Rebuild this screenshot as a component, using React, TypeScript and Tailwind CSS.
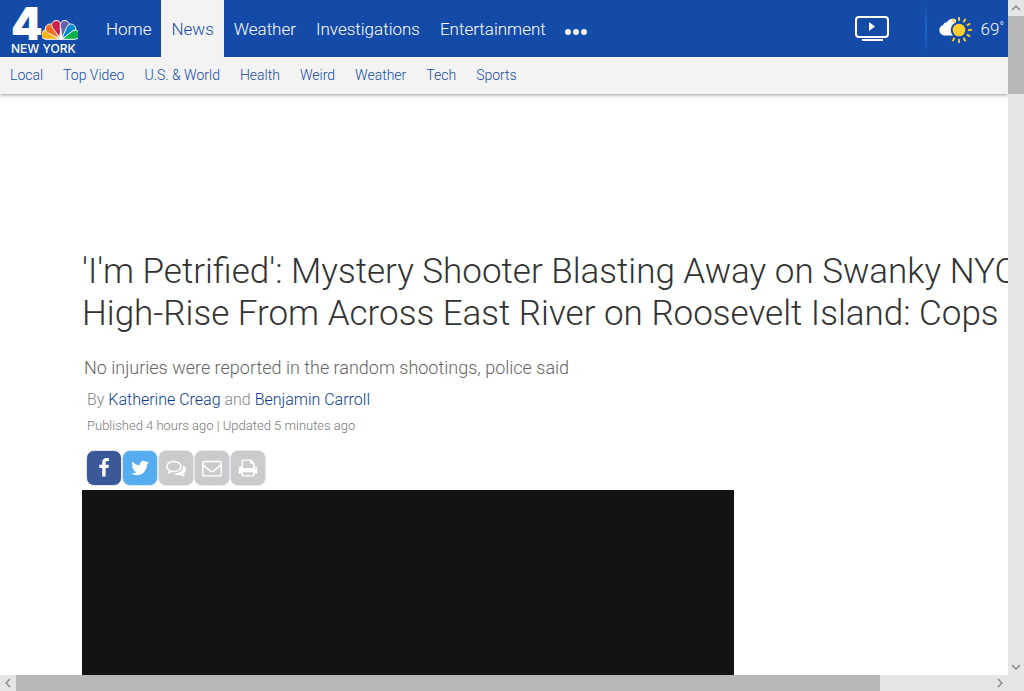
import React from "react";

const sections = ["Home", "News", "Weather", "Investigations", "Entertainment"];
const topics = ["Local", "Top Video", "U.S. & World", "Health", "Weird", "Weather", "Tech", "Sports"];

const shareLinks = [
  {
    label: "Share on Facebook",
    tone: "bg-[#3b5998]",
    d: "M1343 12v264h-157q-86 0-116 36t-30 108v189h293l-39 296h-254v759h-306v-759h-255v-296h255v-218q0-186 104-288.5t277-102.5q147 0 228 12z",
  },
  {
    label: "Share on Twitter",
    tone: "bg-[#55acee]",
    d: "M1684 408q-67 98-162 167 1 14 1 42 0 130-38 259.5t-115.5 248.5-184.5 210.5-258 146-323 54.5q-271 0-496-145 35 4 78 4 225 0 401-138-105-2-188-64.5t-114-159.5q33 5 61 5 43 0 85-11-112-23-185.5-111.5t-73.5-205.5v-4q68 38 146 41-66-44-105-115t-39-154q0-88 44-163 121 149 294.5 238.5t371.5 99.5q-8-38-8-74 0-134 94.5-228.5t228.5-94.5q140 0 236 102 109-21 205-78-37 115-142 178 93-10 186-50z",
  },
  {
    label: "Comments",
    tone: "bg-[#cbcbcb]",
    d: "M704 384q-153 0-286 52t-211.5 141-78.5 191q0 82 53 158t149 132l97 56-35 84q34-20 62-39l44-31 53 10q78 14 153 14 153 0 286-52t211.5-141 78.5-191-78.5-191-211.5-141-286-52zm0-128q191 0 353.5 68.5t256.5 186.5 94 257-94 257-256.5 186.5-353.5 68.5q-86 0-176-16-124 88-278 128-36 9-86 16h-3q-11 0-20.5-8t-11.5-21q-1-3-1-6.5t.5-6.5 2-6l2.5-5 3.5-5.5 4-5 4.5-5 4-4.5q5-6 23-25t26-29.5 22.5-29 25-38.5 20.5-44q-124-72-195-177t-71-224q0-139 94-257t256.5-186.5 353.5-68.5zm822 1169q10 24 20.5 44t25 38.5 22.5 29 26 29.5 23 25q1 1 4 4.5t4.5 5 4 5 3.5 5.5l2.5 5 2 6 .5 6.5-1 6.5q-3 14-13 22t-22 7q-50-7-86-16-154-40-278-128-90 16-176 16-271 0-472-132 58 4 88 4 161 0 309-45t264-129q125-92 192-212t67-254q0-77-23-152 129 71 204 178t75 230q0 120-71 224.500t-195 176.500z",
  },
  {
    label: "Email",
    tone: "bg-[#cbcbcb]",
    d: "M1664 1504v-768q-32 36-69 66-268 206-426 338-51 43-83 67t-86.5 48.5-102.5 24.5h-2q-48 0-102.5-24.5t-86.5-48.5-83-67q-158-132-426-338-37-30-69-66v768q0 13 9.5 22.500t22.500 9.500h1472q13 0 22.500-9.500t9.500-22.500zm0-1051v-24.500l-.5-13-3-12.500-5.500-9-9-7.500-14-2.500h-1472q-13 0-22.500 9.500t-9.500 22.500q0 168 147 284 193 152 401 317 6 5 35 29.500t46 37.500 44.500 31.500 50.500 27.500 43 9h2q20 0 43-9t50.500-27.500 44.500-31.500 46-37.500 35-29.500q208-165 401-317 54-43 100.500-115.500t46.500-131.500zm128-37v1088q0 66-47 113t-113 47h-1472q-66 0-113-47t-47-113v-1088q0-66 47-113t113-47h1472q66 0 113 47t47 113z",
  },
  {
    label: "Print",
    tone: "bg-[#cbcbcb]",
    d: "M448 1536h896v-256h-896v256zm0-640h896v-384h-160q-40 0-68-28t-28-68v-160h-640v640zm1152 64q0-26-19-45t-45-19-45 19-19 45 19 45 45 19 45-19 19-45zm128 0v416q0 13-9.5 22.500t-22.500 9.500h-224v160q0 40-28 68t-68 28h-960q-40 0-68-28t-28-68v-160h-224q-13 0-22.500-9.500t-9.500-22.500v-416q0-79 56.500-135.500t135.500-56.500h64v-544q0-40 28-68t68-28h672q40 0 88 20t76 48l152 152q28 28 48 76t20 88v256h64q79 0 135.500 56.500t56.500 135.500z",
  },
];

const feathers = [
  { angle: -70, fill: "#fbb415" },
  { angle: -43, fill: "#f37021" },
  { angle: -16, fill: "#cc1f4c" },
  { angle: 16, fill: "#6460aa" },
  { angle: 43, fill: "#0089d0" },
  { angle: 70, fill: "#0db14b" },
];

function Peacock() {
  return (
    <svg viewBox="0 0 36 22" className="h-[22px] w-9" aria-hidden="true">
      {feathers.map(({ angle, fill }) => (
        <path
          key={angle}
          transform={`translate(18.500 21) rotate(${angle})`}
          d="M0 -2L-4 -13C-5.600 -18-2.800 -20 0 -20S5.600 -18 4 -13Z"
          fill={fill}
          stroke="#fff"
          strokeWidth="0.900"
          strokeLinejoin="round"
        />
      ))}
      <path d="M16.600 21L18.400 12L17.600 10L19.400 9L20.400 21Z" fill="#fff" />
    </svg>
  );
}

function Logo() {
  return (
    <a href="#home" aria-label="4 New York" className="flex w-[86px] flex-col pt-[7px] pl-[11px] text-white">
      <span className="flex h-[34px] items-end">
        <span className="w-[31px] font-['Inter',sans-serif] text-[45px] leading-[34px] font-black">4</span>
        <Peacock />
      </span>
      <span className="pt-0.5 font-['Inter',sans-serif] text-xs leading-3 font-medium whitespace-nowrap">
        NEW YORK
      </span>
    </a>
  );
}

function WeatherIcon() {
  return (
    <svg viewBox="0 0 36 28" className="h-7 w-9" aria-hidden="true">
      <path d="M7 19.500a5.500 5.500 0 0 1-1-10.600A5 5 0 0 1 10 6a6.500 6.500 0 0 1 9-2.200V19.500Z" fill="#fff" />
      <circle cx="22" cy="14" r="8.300" fill="#144ba9" />
      <circle cx="22" cy="14" r="6.300" fill="#ffd02e" />
      {[-120, -90, -60, -30, 0, 30, 60, 90, 120].map((a) => (
        <path key={a} transform={`rotate(${a} 22 14)`} d="M31 14H35" stroke="#ffd02e" strokeWidth="1.800" />
      ))}
    </svg>
  );
}

function Chevron({ d }: { d: string }) {
  return (
    <svg viewBox="0 0 16 16" className="size-4" fill="none" stroke="#858585" strokeWidth="1.300" aria-hidden="true">
      <path d={d} />
    </svg>
  );
}

export default function App() {
  return (
    <div className="flex h-screen flex-col bg-white font-['Roboto',sans-serif] font-light">
      <div className="flex min-h-0 flex-1">
        <div className="min-w-0 flex-1 overflow-hidden">
          <header className="shadow-[0_1px_4px_rgba(0,0,0,0.4)]">
            <div className="flex h-[57px] bg-[#144ba9] text-white">
              <Logo />
              <nav aria-label="Sections" className="flex flex-1 pl-[10px] text-[17px]">
                {sections.map((name) => (
                  <a
                    key={name}
                    href="#section"
                    className={
                      name === "News"
                        ? "flex items-center bg-[#f3f3f3] px-[10px] pt-0.5 text-[#144ba9]"
                        : "flex items-center px-[10px] pt-0.5"
                    }
                  >
                    {name}
                  </a>
                ))}
                <button type="button" aria-label="More" className="flex items-center px-[9px] pt-[6px]">
                  <svg viewBox="0 0 22 6" className="h-[6px] w-[22px]" fill="currentColor">
                    <circle cx="3" cy="3" r="2.900" />
                    <circle cx="11" cy="3" r="2.900" />
                    <circle cx="19" cy="3" r="2.900" />
                  </svg>
                </button>
              </nav>
              <a href="#live" aria-label="Live TV" className="mr-[35px] flex items-center">
                <svg viewBox="0 0 36 28" className="h-7 w-9" fill="none" stroke="#fff" strokeWidth="2">
                  <rect x="2" y="2" width="32" height="20" rx="3" />
                  <path d="M8 25H29" />
                  <path d="M15 7L21 11.500L15 16Z" fill="#fff" stroke="none" />
                </svg>
              </a>
              <div className="my-1 w-0.5 bg-linear-to-b from-[#144ba9] via-[#1a6cc8] to-[#144ba9]" />
              <a href="#forecast" className="flex items-center gap-2 pt-0.5 pr-1 pl-[10px] text-[17px]">
                <WeatherIcon />
                <span className="flex">
                  69<span className="text-xs leading-5">°</span>
                </span>
              </a>
            </div>
            <nav
              aria-label="Topics"
              className="flex h-[37px] items-center gap-5 bg-[#f3f3f3] px-[10px] pb-px text-sm text-[#144ba9]"
            >
              {topics.map((name) => (
                <a key={name} href="#topic">
                  {name}
                </a>
              ))}
            </nav>
          </header>

          <main className="pt-[157px] pl-[82px]">
            <h1 className="w-[940px] text-[35px] leading-[42px] text-[#333]">
              'I'm Petrified': Mystery Shooter Blasting Away on Swanky NYC High-Rise From Across East River on
              Roosevelt Island: Cops
            </h1>
            <p className="mt-[19px] pl-0.5 text-[18px] leading-7 text-[#666]">
              No injuries were reported in the random shootings, police said
            </p>
            <p className="mt-1 pl-[5px] text-[16px] leading-7 text-[#888]">
              By{" "}
              <a href="#author" className="text-[#0a3d91]">
                Katherine Creag
              </a>{" "}
              and{" "}
              <a href="#author" className="text-[#0a3d91]">
                Benjamin Carroll
              </a>
            </p>
            <p className="pl-[5px] text-[13px] leading-6 text-[#777]">Published 4 hours ago | Updated 5 minutes ago</p>
            <div className="mt-3 flex pl-1">
              {shareLinks.map(({ label, tone, d }) => (
                <button
                  key={label}
                  type="button"
                  aria-label={label}
                  className={`flex size-9 items-center justify-center rounded-lg border border-[#e4e8ee] text-white ${tone}`}
                >
                  <svg viewBox="0 0 1792 1792" className="size-5" fill="currentColor">
                    <path d={d} />
                  </svg>
                </button>
              ))}
            </div>
            <div className="mt-1 h-[367px] w-[652px] bg-[#131313]" />
          </main>
        </div>
        <div className="flex w-4 flex-col bg-[#e5e5e5]" aria-hidden="true">
          <Chevron d="M4 10L8 6L12 10" />
          <div className="h-[78px] bg-[#b8b8b8]" />
          <div className="flex-1" />
          <Chevron d="M4 6L8 10L12 6" />
        </div>
      </div>
      <div className="flex h-4 bg-[#e5e5e5] pr-4" aria-hidden="true">
        <Chevron d="M10 4L6 8L10 12" />
        <div className="w-6/7 bg-[#b8b8b8]" />
        <div className="flex-1" />
        <Chevron d="M6 4L10 8L6 12" />
      </div>
    </div>
  );
}
